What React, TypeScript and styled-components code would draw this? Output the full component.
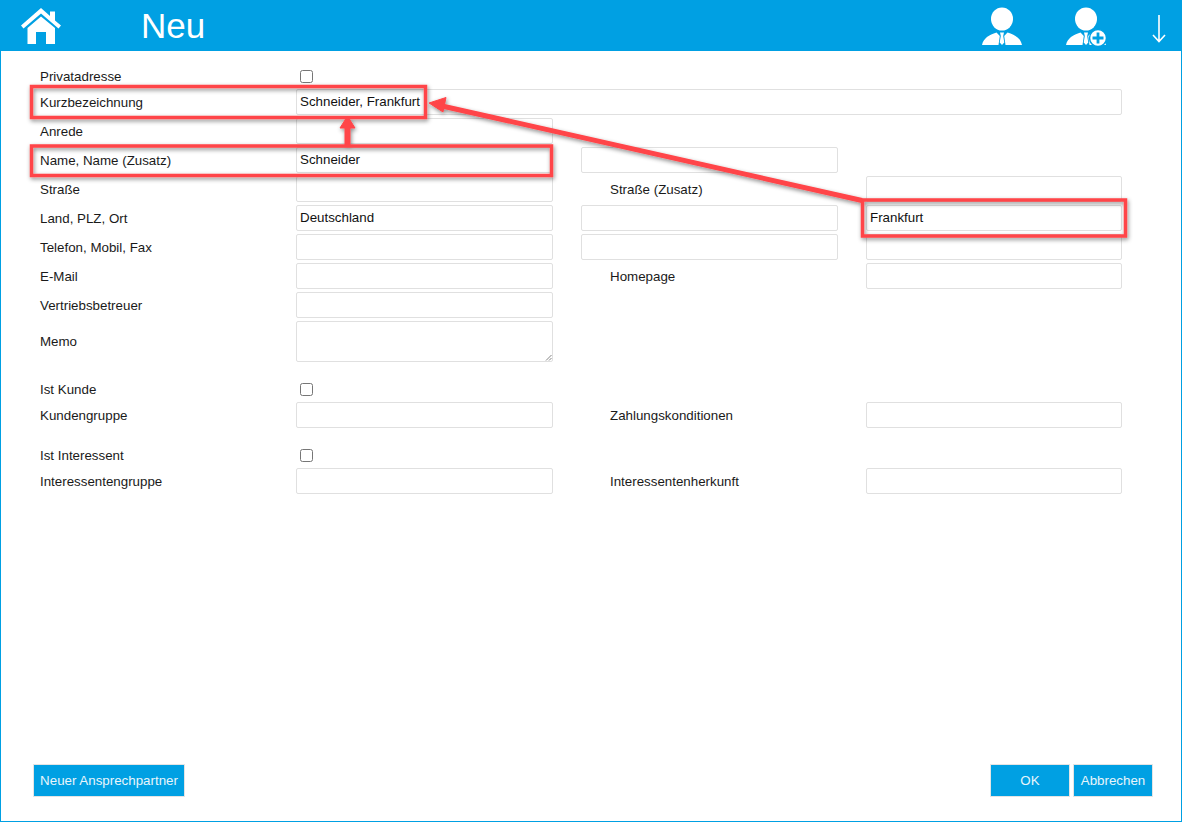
import React from "react";
import styled, { createGlobalStyle } from "styled-components";

const Global = createGlobalStyle`
  html, body { margin: 0; padding: 0; background: #fff; }
  body { font-family: "Liberation Sans", Arial, sans-serif; color: #1a1a1a; }
`;

const Page = styled.div`
  position: relative;
  width: 1182px;
  height: 822px;
  box-sizing: border-box;
  display: flex;
  flex-direction: column;
  border: 1px solid #00a0e3;
  border-top: 0;
`;

const Header = styled.header`
  height: 51px;
  margin: 0 -1px;
  background: #00a0e3;
  display: flex;
  align-items: center;
  flex: none;
  color: #fff;
`;

const HomeButton = styled.div`
  width: 141px;
  padding-left: 21px;
  box-sizing: border-box;
  display: flex;
  align-items: center;
  margin-top: 1px;
`;

const Title = styled.h1`
  flex: 1;
  margin: 0;
  font-size: 35px;
  font-weight: 400;
  line-height: 51px;
`;

const HeaderIcons = styled.div`
  display: flex;
  align-items: center;
  padding-right: 16px;
`;

const IconSlot = styled.div<{ $left: number; $top?: number }>`
  margin-left: ${(p) => p.$left}px;
  margin-top: ${(p) => p.$top ?? 0}px;
  display: flex;
  justify-content: center;
`;

const Form = styled.main`
  flex: 1;
  padding: 15px 0 0 39px;
`;

const Section = styled.section<{ $top?: number }>`
  display: grid;
  grid-template-columns: 256px 257px 28px 257px 28px 256px;
  row-gap: 3px;
  margin-top: ${(p) => p.$top ?? 0}px;
`;

const Label = styled.label<{ $second?: boolean }>`
  font-size: 13.333px;
  line-height: 16px;
  height: 26px;
  display: flex;
  align-items: center;
  padding-top: 1px;
  box-sizing: border-box;
  grid-column: ${(p) => (p.$second ? 4 : 1)};
  padding-left: ${(p) => (p.$second ? 29 : 0)}px;
`;

const Input = styled.div<{ $col?: number; $wide?: boolean }>`
  box-sizing: border-box;
  height: 26px;
  border: 1px solid #e0e0e0;
  border-radius: 2px;
  padding: 0 3px;
  font-size: 13.333px;
  line-height: 24px;
  background: #fff;
  color: #111;
  grid-column: ${(p) => (p.$wide ? "2 / 7" : p.$col ?? 2)};
`;

const Memo = styled(Input)`
  position: relative;
  height: 41px;
`;

const Grip = styled.svg`
  position: absolute;
  right: 0;
  bottom: 0;
`;

const CheckCell = styled.div`
  grid-column: 2;
  display: flex;
  align-items: center;
  padding-left: 4px;
  height: 20px;
`;

const CheckRowLabel = styled(Label)`
  height: 20px;
`;

const MemoLabel = styled(Label)`
  height: 41px;
`;

const Check = styled.span`
  box-sizing: border-box;
  width: 13px;
  height: 13px;
  border: 1px solid #767676;
  border-radius: 2.5px;
  background: #fff;
`;

const Footer = styled.footer`
  flex: none;
  height: 57px;
  box-sizing: border-box;
  padding: 0 28px 0 32px;
  display: flex;
  align-items: flex-start;
  gap: 3px;
`;

const Button = styled.button<{ $w: number }>`
  box-sizing: border-box;
  width: ${(p) => p.$w}px;
  height: 33px;
  padding: 0;
  background: #00a0e3;
  border: 1px solid #e4e4e4;
  color: #e8f5fb;
  font: 13.333px "Liberation Sans", Arial, sans-serif;
`;

const Spacer = styled.div`
  flex: 1;
`;

const Annotations = styled.svg`
  position: absolute;
  left: -1px;
  top: 0;
  pointer-events: none;
`;

const HomeIcon = () => (
  <svg width="40" height="36" viewBox="0 0 40 36" fill="#fff">
    <path d="M0 17.500 L20 0 L29 8 V3.500 H34 V12.500 L40 17.500 L37.500 20.500 L20 5.500 L2.500 20.500 Z" />
    <path d="M6.500 20 L20 8.500 L34 20 V36 H25 V24 H15 V36 H6.500 Z" />
  </svg>
);

const PersonIcon = ({ plus }: { plus?: boolean }) => (
  <svg width="42" height="40" viewBox="0 0 42 40">
    <ellipse cx="21" cy="13" rx="11" ry="11.500" fill="#fff" />
    <path d="M1 39 C2.500 32 8 29 15.500 26.500 L18.800 30 L17.500 39 Z M41 39 C39.500 32 34 29 26.500 26.500 L23.200 30 L24.500 39 Z M19 26.500 H23 L22.200 30 L23.300 36.500 L21 39 L18.700 36.500 L19.800 30 Z" fill="#fff" />
    {plus && (
      <>
        <circle cx="33" cy="32" r="8.500" fill="#fff" stroke="#00a0e3" strokeWidth="1.500" />
        <path d="M33 26.500 V37.500 M27.500 32 H38.500" stroke="#00a0e3" strokeWidth="2.800" />
      </>
    )}
  </svg>
);

const DownArrow = () => (
  <svg width="14" height="28" viewBox="0 0 14 28" fill="none" stroke="#fff" strokeWidth="1.600">
    <path d="M7 0 V26 M1 20 L7 26.500 L13 20" />
  </svg>
);

const App = () => (
  <>
    <Global />
    <Page>
      <Header>
        <HomeButton>
          <HomeIcon />
        </HomeButton>
        <Title>Neu</Title>
        <HeaderIcons>
          <IconSlot $left={0}><PersonIcon /></IconSlot>
          <IconSlot $left={42}><PersonIcon plus /></IconSlot>
          <IconSlot $left={45} $top={6}><DownArrow /></IconSlot>
        </HeaderIcons>
      </Header>
      <Form>
        <Section>
          <CheckRowLabel>Privatadresse</CheckRowLabel>
          <CheckCell><Check /></CheckCell>
          <Label>Kurzbezeichnung</Label>
          <Input $wide>Schneider, Frankfurt</Input>
          <Label>Anrede</Label>
          <Input />
          <Label>Name, Name (Zusatz)</Label>
          <Input>Schneider</Input>
          <Input $col={4} />
          <Label>Straße</Label>
          <Input />
          <Label $second>Straße (Zusatz)</Label>
          <Input $col={6} />
          <Label>Land, PLZ, Ort</Label>
          <Input>Deutschland</Input>
          <Input $col={4} />
          <Input $col={6}>Frankfurt</Input>
          <Label>Telefon, Mobil, Fax</Label>
          <Input />
          <Input $col={4} />
          <Input $col={6} />
          <Label>E-Mail</Label>
          <Input />
          <Label $second>Homepage</Label>
          <Input $col={6} />
          <Label>Vertriebsbetreuer</Label>
          <Input />
          <MemoLabel>Memo</MemoLabel>
          <Memo>
            <Grip width="7" height="7" viewBox="0 0 7 7" stroke="#666" strokeWidth="0.800">
              <path d="M1 6.500 L6.500 1 M4 6.500 L6.500 4" />
            </Grip>
          </Memo>
        </Section>
        <Section $top={17}>
          <CheckRowLabel>Ist Kunde</CheckRowLabel>
          <CheckCell><Check /></CheckCell>
          <Label>Kundengruppe</Label>
          <Input />
          <Label $second>Zahlungskonditionen</Label>
          <Input $col={6} />
        </Section>
        <Section $top={17}>
          <CheckRowLabel>Ist Interessent</CheckRowLabel>
          <CheckCell><Check /></CheckCell>
          <Label>Interessentengruppe</Label>
          <Input />
          <Label $second>Interessentenherkunft</Label>
          <Input $col={6} />
        </Section>
      </Form>
      <Footer>
        <Button $w={152}>Neuer Ansprechpartner</Button>
        <Spacer />
        <Button $w={80}>OK</Button>
        <Button $w={80}>Abbrechen</Button>
      </Footer>
      <Annotations width="1182" height="822" viewBox="0 0 1182 822">
        <defs>
          <filter id="annShadow" x="-5%" y="-20%" width="110%" height="140%">
            <feDropShadow dx="1" dy="2" stdDeviation="2" floodColor="#000" floodOpacity="0.45" />
          </filter>
        </defs>
        <g filter="url(#annShadow)" fill="none" stroke="#ff4548" strokeWidth="3.500">
          <rect x="31.500" y="86.500" width="394" height="31" />
          <rect x="31.500" y="146" width="520" height="29.500" />
          <rect x="862.500" y="200" width="263" height="36" />
          <path d="M862 200.500 L442 106" strokeWidth="5" />
          <path d="M347.500 146 V126" strokeWidth="6" />
          <path d="M429 103 L446 97.500 L443 112 Z" fill="#ff4548" strokeWidth="1" />
          <path d="M347.500 116 L355 128 H340 Z" fill="#ff4548" strokeWidth="1" />
        </g>
      </Annotations>
    </Page>
  </>
);

export default App;
